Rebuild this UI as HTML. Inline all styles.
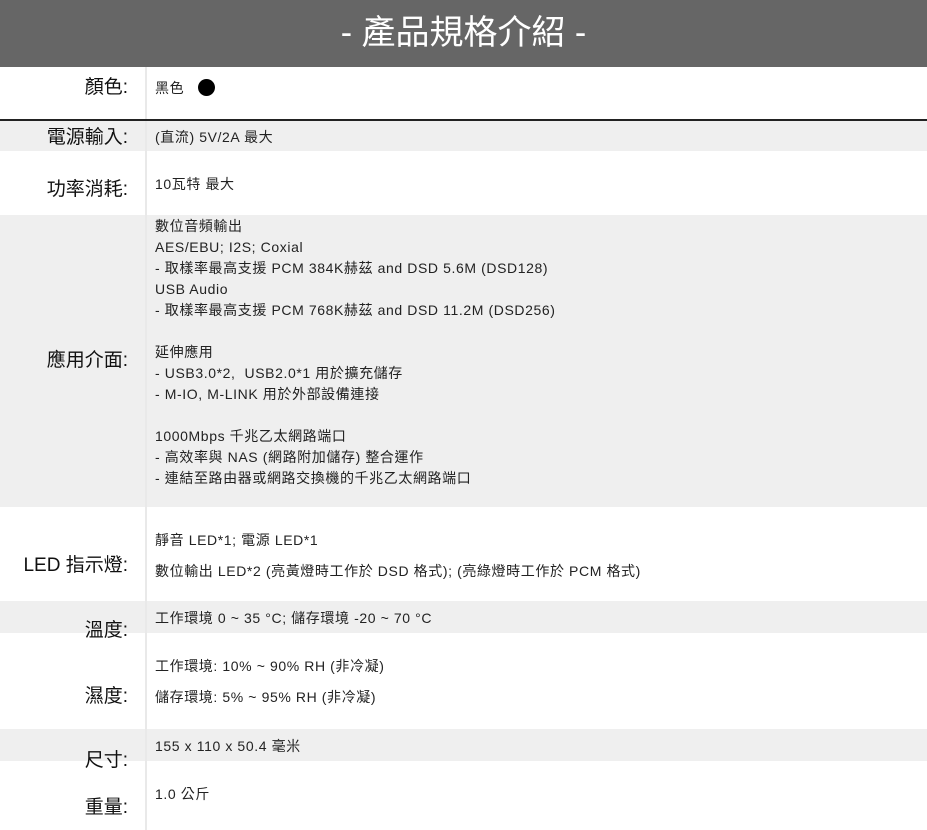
<!DOCTYPE html>
<html><head><meta charset="utf-8"><style>
*{margin:0;padding:0;box-sizing:border-box}
body{width:927px;height:830px;background:#fff;position:relative;overflow:hidden;font-family:"Liberation Sans","Noto Sans CJK TC",sans-serif;color:#222}
.hd{position:absolute;left:0;top:0;width:927px;height:67px;background:#666;color:#fff;font-size:34px;text-align:center;line-height:67px}
.band{position:absolute;left:0;width:927px;background:#efefef}
.vl{position:absolute;left:145px;top:67px;width:2px;height:763px;background:#e9e9e9}
.hl{position:absolute;left:0;top:119px;width:927px;height:2px;background:#222}
.lb{position:absolute;right:799px;font-size:19px;line-height:24px;white-space:nowrap;color:#111}
.v{position:absolute;left:155px;font-size:14px;line-height:21px;white-space:nowrap;letter-spacing:0.6px;margin-top:1px}
.dot{display:inline-block;width:17px;height:17px;border-radius:50%;background:#000;vertical-align:-3px;margin-left:14px}
</style></head><body>
<div class="hd">- 產品規格介紹 -</div>
<div class="band" style="top:121px;height:30px"></div>
<div class="band" style="top:215px;height:292px"></div>
<div class="band" style="top:601px;height:32px"></div>
<div class="band" style="top:729px;height:32px"></div>
<div class="vl"></div>
<div class="hl"></div>

<div class="lb" style="top:76px">顏色:</div>
<div class="lb" style="top:126px">電源輸入:</div>
<div class="lb" style="top:178px">功率消耗:</div>
<div class="lb" style="top:349px">應用介面:</div>
<div class="lb" style="top:554px">LED 指示燈:</div>
<div class="lb" style="top:619px">溫度:</div>
<div class="lb" style="top:685px">濕度:</div>
<div class="lb" style="top:749px">尺寸:</div>
<div class="lb" style="top:796px">重量:</div>

<div class="v" style="top:77px">黑色<span class="dot"></span></div>
<div class="v" style="top:126px">(直流) 5V/2A 最大</div>
<div class="v" style="top:173px">10瓦特 最大</div>
<div class="v" style="top:215px">數位音頻輸出<br>AES/EBU; I2S; Coxial<br>- 取樣率最高支援 PCM 384K赫茲 and DSD 5.6M (DSD128)<br>USB Audio<br>- 取樣率最高支援 PCM 768K赫茲 and DSD 11.2M (DSD256)<br>&nbsp;<br>延伸應用<br>- USB3.0*2,&nbsp; USB2.0*1 用於擴充儲存<br>- M-IO, M-LINK 用於外部設備連接<br>&nbsp;<br>1000Mbps 千兆乙太網路端口<br>- 高效率與 NAS (網路附加儲存) 整合運作<br>- 連結至路由器或網路交換機的千兆乙太網路端口</div>
<div class="v" style="top:529px">靜音 LED*1; 電源 LED*1</div>
<div class="v" style="top:560px">數位輸出 LED*2 (亮黃燈時工作於 DSD 格式); (亮綠燈時工作於 PCM 格式)</div>
<div class="v" style="top:607px">工作環境 0 ~ 35 °C; 儲存環境 -20 ~ 70 °C</div>
<div class="v" style="top:655px">工作環境: 10% ~ 90% RH (非冷凝)</div>
<div class="v" style="top:686px">儲存環境: 5% ~ 95% RH (非冷凝)</div>
<div class="v" style="top:735px">155 x 110 x 50.4 毫米</div>
<div class="v" style="top:783px">1.0 公斤</div>
</body></html>
